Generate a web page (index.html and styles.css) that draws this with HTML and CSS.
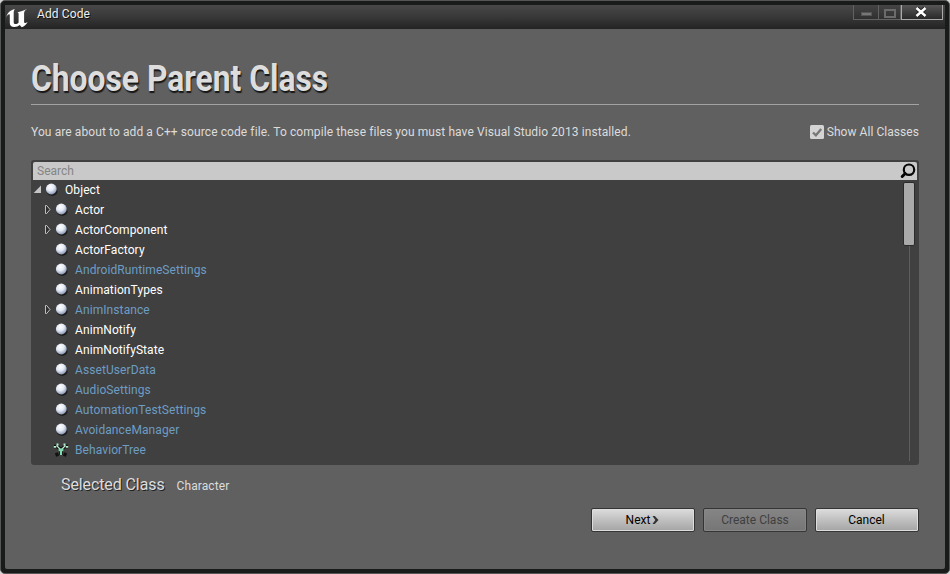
FILE: index.html
```
<!DOCTYPE html>
<html lang="en">
<head>
<meta charset="utf-8">
<title>Add Code</title>
<link rel="stylesheet" href="styles.css">
</head>
<body>
<svg width="0" height="0" class="defs">
  <defs>
    <radialGradient id="ball" cx="40%" cy="30%" r="70%">
      <stop offset="0" stop-color="#fff"/><stop offset=".5" stop-color="#e4eaf5"/><stop offset="1" stop-color="#8d9ab5"/>
    </radialGradient>
    <symbol id="sphere" viewBox="0 0 16 16"><ellipse cx="9.200" cy="9.500" rx="5.400" ry="4.400" fill="#191919" opacity=".85"/><circle cx="8.300" cy="7" r="5.400" fill="url(#ball)"/></symbol>
    <symbol id="closed" viewBox="0 0 8 10"><path d="M1.500 .5v8h1.200L6 4.500 2.700 .5z" fill="#303030" stroke="#d0d0d0" stroke-width=".9"/></symbol>
  </defs>
</svg>
<div class="window">
  <header class="titlebar">
    <svg class="logo" viewBox="0 0 24 22"><path d="M1 11C2 6 5 3 10 2 9 3 8.700 4 8.700 6v9c0 1.500.6 2.100 1.600 2.100 1.400 0 2.600-.7 3.300-1.700V7c0-1-.4-1.500-1.200-1.700C15 4.700 19 3.700 22.300 1.800c-2.200 1.400-3.200 2.600-3.200 4.500v8.500c0 1.200.8 1.500 1.500 1.200l2-1c-1.200 2.700-3.400 4.500-5.900 5.200l-2-2.100c-1.400 1.200-3.200 2-5.300 2-3 0-4.600-1.500-4.600-4V8.500c0-1-.3-1.500-.9-1.200C2.600 7.700 1.700 9 1 11z" fill="#fff"/></svg>
    <span class="caption">Add Code</span>
    <div class="controls">
      <span class="control min"><i></i></span><span class="control max"><i></i></span><span class="control close"><svg viewBox="0 0 12 10"><path d="M2 1.200l8 7.600M10 1.200L2 8.800" stroke="#151515" stroke-width="4"/><path d="M1.500 1l9 8M10.500 1l-9 8" stroke="#fff" stroke-width="2.600"/></svg></span>
    </div>
  </header>
  <main>
    <h1><span>Choose Parent Class</span></h1>
    <div class="intro">
      <p>You are about to add a C++ source code file. To compile these files you must have Visual Studio 2013 installed.</p>
      <label><svg class="check" viewBox="0 0 14 14"><rect width="14" height="14" rx="1.500" fill="#d4d4d4"/><path d="M3 7.500l2.900 2.800L11.200 4" fill="none" stroke="#777" stroke-width="2.300"/></svg><span>Show All Classes</span></label>
    </div>
    <section class="picker">
      <div class="search"><span>Search</span><svg viewBox="0 0 16 16"><circle cx="9" cy="6.700" r="5.200" fill="none" stroke="#050505" stroke-width="2.200"/><path d="M5.200 10.500L2.200 13.500" stroke="#050505" stroke-width="3" stroke-linecap="round"/></svg></div>
      <div class="list">
        <ul class="tree">
          <li class="root"><svg class="arrow" viewBox="0 0 8 10"><path d="M7 .5V8H-.3z" fill="#c5c5c5"/></svg><svg class="icon"><use href="#sphere"/></svg><span>Object</span></li>
          <li><svg class="arrow"><use href="#closed"/></svg><svg class="icon"><use href="#sphere"/></svg><span>Actor</span></li>
          <li><svg class="arrow"><use href="#closed"/></svg><svg class="icon"><use href="#sphere"/></svg><span>ActorComponent</span></li>
          <li><i class="arrow"></i><svg class="icon"><use href="#sphere"/></svg><span>ActorFactory</span></li>
          <li class="blue"><i class="arrow"></i><svg class="icon"><use href="#sphere"/></svg><span>AndroidRuntimeSettings</span></li>
          <li><i class="arrow"></i><svg class="icon"><use href="#sphere"/></svg><span>AnimationTypes</span></li>
          <li class="blue"><svg class="arrow"><use href="#closed"/></svg><svg class="icon"><use href="#sphere"/></svg><span>AnimInstance</span></li>
          <li><i class="arrow"></i><svg class="icon"><use href="#sphere"/></svg><span>AnimNotify</span></li>
          <li><i class="arrow"></i><svg class="icon"><use href="#sphere"/></svg><span>AnimNotifyState</span></li>
          <li class="blue"><i class="arrow"></i><svg class="icon"><use href="#sphere"/></svg><span>AssetUserData</span></li>
          <li class="blue"><i class="arrow"></i><svg class="icon"><use href="#sphere"/></svg><span>AudioSettings</span></li>
          <li class="blue"><i class="arrow"></i><svg class="icon"><use href="#sphere"/></svg><span>AutomationTestSettings</span></li>
          <li class="blue"><i class="arrow"></i><svg class="icon"><use href="#sphere"/></svg><span>AvoidanceManager</span></li>
          <li class="blue"><i class="arrow"></i><svg class="icon" viewBox="0 0 16 16"><path d="M8 13V8L3 3M8 8l5-5M1 4.500h4M11 4.500h4M2.500 13l3-1M13.500 13l-3-1" fill="none" stroke="#111" stroke-width="3.500"/><path d="M8 12V8L3.500 3.500M8 8l4.500-4.500" fill="none" stroke="#bfe8d2" stroke-width="1.200"/><path d="M5.500 6.500h5v2L9 9.500V13H7V9.500L5.500 8.500z" fill="#7fdcae"/><path d="M.8 4h2.400v1.800H.8zM3.500 1.500h2v2.200h-2zM12.800 4h2.400v1.800h-2.400zM10.500 1.500h2v2.200h-2z" fill="#b5edcf"/></svg><span>BehaviorTree</span></li>
        </ul>
        <div class="scroll"><div class="thumb"></div><div class="track"></div></div>
      </div>
    </section>
    <div class="selected"><strong>Selected Class</strong><span class="value">Character</span></div>
    <footer><button><span>Next</span><svg viewBox="0 0 7 8"><path d="M.5 0h2.300L6.500 4 2.800 8H.5l2.800-4z" fill="#333"/></svg></button><button disabled><span>Create Class</span></button><button><span>Cancel</span></button></footer>
  </main>
</div>
</body>
</html>
```
FILE: styles.css
```
* { box-sizing: border-box; }
body { margin: 0; width: 950px; height: 574px; overflow: hidden; background: #d5d5d5; font: 12px/20px Roboto, sans-serif; color: #dcdcdc; }
.defs { display: block; height: 0; }
svg { flex: none; overflow: visible; }
h1, p, ul { margin: 0; padding: 0; }
.window { width: 950px; height: 574px; border: 1px solid #555; border-radius: 5px; background: #191b1b; padding: 4px; display: flex; flex-direction: column; }
.titlebar { height: 24px; display: flex; background: linear-gradient(#484848, #3a3a3a 45%, #232323); }
.logo { width: 24px; height: 22px; margin-top: 2px; }
.caption { margin-left: 8px; line-height: 18px; color: #eee; letter-spacing: .12px; text-shadow: 1px 1px #111; white-space: nowrap; }
.controls { margin-left: auto; margin-right: 2px; height: 15px; display: flex; }
.control { width: 26px; border: 1px solid #626262; border-top: 0; display: flex; align-items: center; justify-content: center; background: linear-gradient(#454545, #303030); }
.control + .control { border-left: 0; }
.max { width: 22px; }
.control.close { width: 42px; border: 1px solid #aaa; border-top: 0; background: linear-gradient(#575757, #292929); }
.close svg { width: 12px; height: 10px; margin-right: 2px; }
.min i { width: 11px; height: 4px; margin-top: 4px; background: #777; border: 1px solid #555; }
.max i { width: 12px; height: 9px; margin-top: 2px; border: 2px solid #6b6b6b; }
main { flex: 1; background: #606060; padding: 26px 26px 0; border-radius: 0 0 2px 2px; }
h1 { height: 50px; border-bottom: 1px solid #a3a3a3; font-size: 36px; line-height: 49px; font-weight: 700; color: #ddd; text-shadow: 1px 2px 1px #171717; white-space: nowrap; }
h1 span { display: inline-block; transform: scaleX(.883); transform-origin: left; }
.intro { height: 55px; padding-top: 17px; display: flex; justify-content: space-between; white-space: nowrap; letter-spacing: .093px; }
.intro label { display: flex; gap: 3px; height: 20px; align-items: center; letter-spacing: .05px; }
.check { width: 14px; height: 14px; }
.picker { height: 305px; background: #404040; border-radius: 3px; padding: 2px; overflow: hidden; }
.search { height: 18px; border-radius: 2px 2px 0 0; background: #c9c9c9; color: #858585; padding: 0 1px 0 4px; line-height: 18px; display: flex; justify-content: space-between; }
.search svg { width: 16px; height: 16px; margin-top: 1px; }
.list { display: flex; justify-content: space-between; }
.tree { list-style: none; color: #fff; letter-spacing: .09px; }
.tree li { height: 20px; display: flex; align-items: center; padding-left: 11px; white-space: nowrap; }
.tree .root { padding-left: 1px; }
.arrow { width: 8px; height: 10px; margin-right: 1px; }
.icon { width: 16px; height: 16px; margin-right: 6px; }
.tree .blue { color: #6d9dc4; }
.scroll { width: 14px; margin-right: 1px; padding-top: 2px; display: flex; flex-direction: column; align-items: center; height: 281px; }
.thumb { width: 12px; height: 64px; border: 1px solid #2b2b2b; border-radius: 2px; background: #aaa; }
.track { width: 1px; flex: 1; background: #5e5e5e; }
.selected { display: flex; height: 20px; margin: 10px 0 0 30px; align-items: center; }
.selected strong { font-size: 16px; font-weight: 400; letter-spacing: -.1px; text-shadow: 1px 1px #222; color: #ddd; white-space: nowrap; }
.value { margin: 2px 0 0 12px; letter-spacing: .09px; }
footer { display: flex; justify-content: flex-end; gap: 8px; margin-top: 13px; }
button { width: 104px; height: 24px; border: 1px solid #353535; border-radius: 2px; padding: 0 1px 0 0; display: flex; align-items: center; justify-content: center; gap: 2px; font: inherit; color: #000; background: linear-gradient(#dcdcdc, #a4a4a4); box-shadow: inset 0 0 0 1px #ddd; }
button svg { width: 7px; height: 8px; }
button:disabled { color: #3f3f3f; background: linear-gradient(#858585, #767676); box-shadow: inset 0 0 0 1px #868686; padding: 0; }
```
